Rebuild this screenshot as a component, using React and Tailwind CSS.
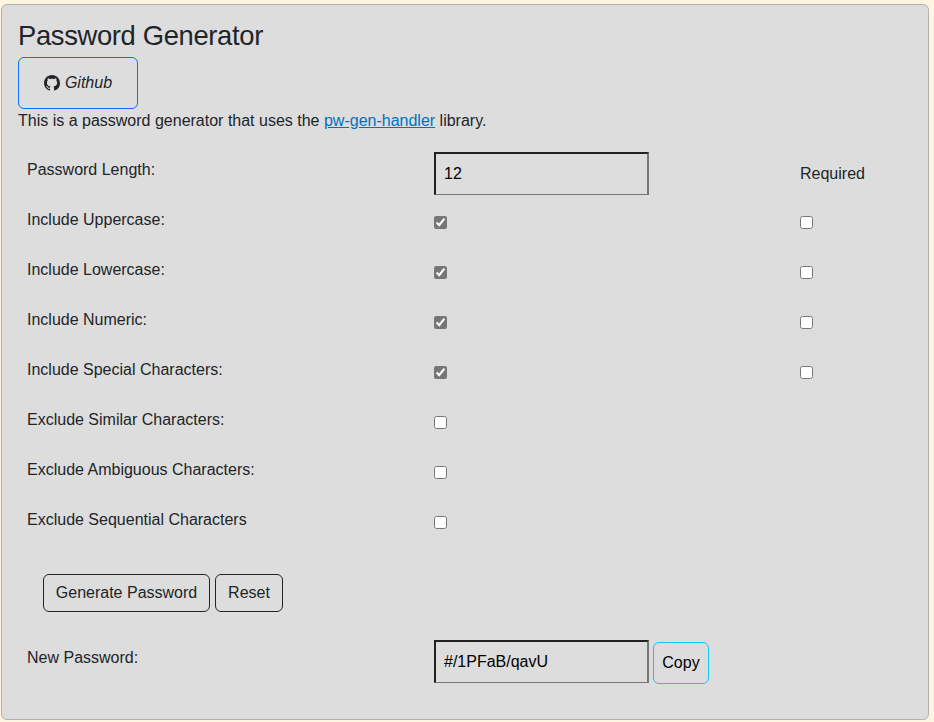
import { BsGithub } from "react-icons/bs";

const OPTIONS = [
  { label: "Include Uppercase:", checked: true, required: true },
  { label: "Include Lowercase:", checked: true, required: true },
  { label: "Include Numeric:", checked: true, required: true },
  { label: "Include Special Characters:", checked: true, required: true },
  { label: "Exclude Similar Characters:", checked: false, required: false },
  { label: "Exclude Ambiguous Characters:", checked: false, required: false },
  { label: "Exclude Sequential Characters", checked: false, required: false },
];

const ROW = "grid grid-cols-[407px_366px_1fr] pl-[9px]";
const FIELD =
  "block h-[43px] w-[215px] rounded-none border-2 border-b border-t-[#212121] border-l-[#212121] border-r-[#767676] border-b-[#767676] bg-transparent px-2 text-base text-black outline-none";

function Check({ checked, label }) {
  return (
    <input
      type="checkbox"
      defaultChecked={checked}
      aria-label={label}
      className="mt-[21px] block size-[13px] accent-[#767676]"
    />
  );
}

export default function App() {
  return (
    <div className="h-[722px] overflow-hidden bg-[#fdf5e0] pt-1 pl-px font-['Liberation_Sans',Arial,sans-serif] text-base leading-6 text-[#212529]">
      <main className="h-[716px] w-[928px] rounded-md border border-[#b1b1b1] bg-[#dddddd] px-4 pt-[13px]">
        <h1 className="text-[27.4px] leading-[35px] tracking-[-0.35px]">Password Generator</h1>
        <a
          href="#github"
          className="mt-1 flex h-[52px] w-[120px] items-center justify-center gap-[5px] rounded-md border border-[#0d6efd] italic"
        >
          <BsGithub className="size-4" />
          <span>Github</span>
        </a>
        <p>
          This is a password generator that uses the{" "}
          <a href="#library" className="text-[#0071c1] underline">
            pw-gen-handler
          </a>{" "}
          library.
        </p>

        <div className="mt-3">
          <div className={`${ROW} h-[50px]`}>
            <label className="pt-[13px]">Password Length:</label>
            <div className="pt-[7px]">
              <input type="text" defaultValue="12" className={FIELD} />
            </div>
            <span className="pt-[17px]">Required</span>
          </div>
          {OPTIONS.map((o) => (
            <div key={o.label} className={`${ROW} h-[50px]`}>
              <label className="pt-[13px]">{o.label}</label>
              <Check checked={o.checked} label={o.label} />
              {o.required && <Check checked={false} label="Required" />}
            </div>
          ))}
        </div>

        <div className="mt-[29px] flex gap-[5px] pl-[25px]">
          <button className="h-[38px] w-[167px] rounded-md border border-[#212529]">
            Generate Password
          </button>
          <button className="h-[38px] w-[68px] rounded-md border border-[#212529]">
            Reset
          </button>
        </div>

        <div className={`${ROW} mt-7`}>
          <label className="pt-1.5">New Password:</label>
          <div className="flex gap-1">
            <input type="text" defaultValue="#/1PFaB/qavU" className={FIELD} />
            <button className="mt-0.5 h-[42px] w-14 rounded-md border border-[#0dcaf0] text-black">
              Copy
            </button>
          </div>
        </div>
      </main>
    </div>
  );
}
